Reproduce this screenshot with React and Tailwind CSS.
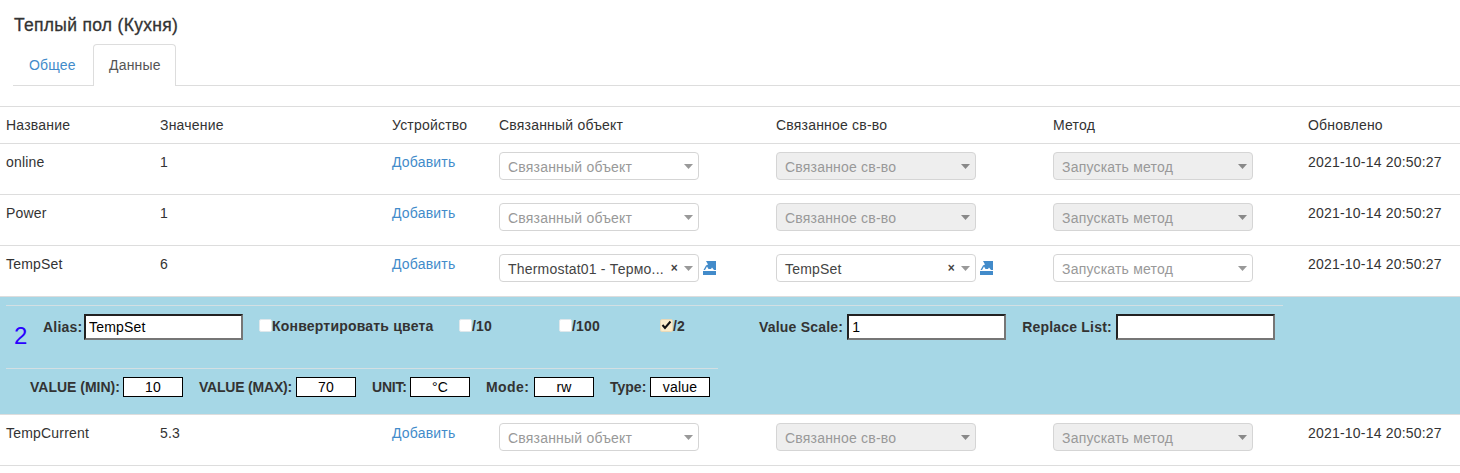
const rows1 = [
  { name: "online", value: "1" },
  { name: "Power", value: "1" },
];

function Arrow({ disabled }) {
  return (
    <svg width="9" height="5" viewBox="0 0 9 5" className="shrink-0">
      <path d="M0 0H9L4.5 5Z" fill={disabled ? "#888" : "#999"} />
    </svg>
  );
}

function LinkIcon() {
  return (
    <svg width="13" height="14" viewBox="0 0 13 14" className="ml-[4px] mt-[7px] shrink-0">
      <path
        d="M0 10H13V14H0ZM3 0H13V9H11L9 6.5 8 8H5.5L4 5.5 2 9H0.5L3 4.5 5 3.5Z"
        fill="#428bca"
      />
    </svg>
  );
}

function Select({ text, value, disabled, clear }) {
  return (
    <div className="flex items-start">
      <div
        className={
          "flex h-[28px] w-[200px] items-center rounded-[4px] border border-[#d5d5d5] pl-[8px] pr-[5px] " +
          (disabled ? "bg-[#eeeeee]" : "bg-white")
        }
      >
        <span className={"mt-[1px] min-w-0 flex-1 whitespace-nowrap " + (value ? "text-[#444444]" : "text-[#999999]")}>
          {value || text}
        </span>
        {clear && <span className="mr-[6px] text-[12px] font-bold leading-none text-[#444444]">×</span>}
        <Arrow disabled={disabled} />
      </div>
      {clear && <LinkIcon />}
    </div>
  );
}

function DataRow({ name, value, obj, prop }) {
  return (
    <tr className="border-b border-[#dddddd] align-top">
      <td className="h-[51px] pl-[6px] pt-[8px]">{name}</td>
      <td className="pl-[6px] pt-[8px]">{value}</td>
      <td className="pl-[6px] pt-[8px]">
        <a className="text-[#428bca]">Добавить</a>
      </td>
      <td className="pl-[6px] pt-[8px]">
        {obj ? <Select value={obj} clear /> : <Select text="Связанный объект" />}
      </td>
      <td className="pl-[6px] pt-[8px]">
        {prop ? <Select value={prop} clear /> : <Select text="Связанное св-во" disabled />}
      </td>
      <td className="pl-[6px] pt-[8px]">
        <Select text="Запускать метод" disabled={!prop} />
      </td>
      <td className="pl-[6px] pt-[8px] whitespace-nowrap">2021-10-14 20:50:27</td>
    </tr>
  );
}

function Check({ checked, label, width }) {
  return (
    <label className={"flex items-center " + width}>
      <span
        className={
          "mb-[2px] flex h-[13px] w-[13px] shrink-0 items-center justify-center rounded-[2px] border " +
          (checked ? "border-[#e9d9b8] bg-[#fbeccb]" : "border-[#dfe8ec] bg-white")
        }
      >
        {checked && (
          <svg width="11" height="10" viewBox="0 0 11 10">
            <path d="M1.5 5L4 8L9.5 1.5" fill="none" stroke="#111" strokeWidth="2" />
          </svg>
        )}
      </span>
      <b className="text-[#333333]">{label}</b>
    </label>
  );
}

function BigField({ label, value, className, labelWidth }) {
  return (
    <label className={"flex items-center gap-[4px] " + className}>
      <b className={"whitespace-nowrap text-[#333333] " + labelWidth}>{label}</b>
      <input
        readOnly
        value={value}
        className="h-[26px] w-[159px] border-2 border-t-[#222222] border-l-[#222222] border-r-[#767676] border-b-[#767676] bg-white pl-[3px] text-black outline-none"
      />
    </label>
  );
}

function SmallField({ label, value, labelClass }) {
  return (
    <label className="flex items-center gap-[4px]">
      <b className={"whitespace-nowrap text-[#333333] " + labelClass}>{label}</b>
      <input
        readOnly
        value={value}
        className="h-[20px] w-[60px] border border-black bg-white text-center text-black outline-none"
      />
    </label>
  );
}

export default function App() {
  return (
    <div className="h-[473px] w-[1460px] overflow-hidden bg-white font-['Liberation_Sans',Arial,sans-serif] text-[14px] leading-[20px] tracking-[0.2px] text-[#333333]">
      <h4 className="pl-[14px] pt-[16px] text-[17.5px] font-normal leading-[18px] tracking-[0.3px] [-webkit-text-stroke:0.3px_#333333]">
        Теплый пол (Кухня)
      </h4>
      <div className="ml-[13px] mt-[10px] flex h-[42px] border-b border-[#dddddd]">
        <a className="w-[80px] pl-[16px] pt-[11px] text-[#428bca]">Общее</a>
        <div className="-mb-px h-[42px] w-[83px] rounded-t-[4px] border border-b-0 border-[#dddddd] bg-white pl-[15px] pt-[10px] text-[#555555]">
          Данные
        </div>
      </div>

      <table className="mt-[20px] w-[1460px] table-fixed border-collapse border-t border-[#dddddd]">
        <colgroup>
          <col className="w-[154px]" />
          <col className="w-[232px]" />
          <col className="w-[107px]" />
          <col className="w-[277px]" />
          <col className="w-[277px]" />
          <col className="w-[255px]" />
          <col className="w-[158px]" />
        </colgroup>
        <thead>
          <tr className="border-b border-[#dddddd] text-left">
            <th className="h-[37px] pl-[6px] font-normal">Название</th>
            <th className="pl-[6px] font-normal">Значение</th>
            <th className="pl-[6px] font-normal whitespace-nowrap">Устройство</th>
            <th className="pl-[6px] font-normal">Связанный объект</th>
            <th className="pl-[6px] font-normal">Связанное св-во</th>
            <th className="pl-[6px] font-normal">Метод</th>
            <th className="pl-[6px] font-normal">Обновлено</th>
          </tr>
        </thead>
        <tbody>
          {rows1.map((r) => (
            <DataRow key={r.name} {...r} />
          ))}
          <DataRow name="TempSet" value="6" obj="Thermostat01 - Термо..." prop="TempSet" />
          <tr className="border-b border-[#dddddd]">
            <td colSpan={7} className="h-[118px] bg-[#a6d7e6] align-top">
              <div className="ml-[6px] mt-[8px] w-[1277px] border-t border-[#d3dfe3]" />
              <div className="flex h-[62px] items-start">
                <span className="ml-[14px] mt-[15px] w-[29px] text-[24px] leading-[30px] tracking-normal text-[#2a00ff]">2</span>
                <BigField label="Alias:" value="TempSet" labelWidth="w-[37px]" className="mt-[8px]" />
                <div className="ml-[16px] mt-[10px] flex">
                  <Check label="Конвертировать цвета" width="w-[200px]" />
                  <Check label="/10" width="w-[100px]" />
                  <Check label="/100" width="w-[101px]" />
                  <Check checked label="/2" width="w-[99px]" />
                </div>
                <BigField label="Value Scale:" value="1" className="mt-[8px]" />
                <BigField label="Replace List:" value="" className="ml-[16px] mt-[8px]" />
              </div>
              <div className="ml-[6px] w-[712px] border-t border-[#d3dfe3]" />
              <div className="ml-[30px] mt-[8px] flex gap-[16px]">
                <SmallField label="VALUE (MIN):" value="10" labelClass="w-[89px] tracking-normal" />
                <SmallField label="VALUE (MAX):" value="70" labelClass="w-[93px] tracking-[-0.2px]" />
                <SmallField label="UNIT:" value="°C" labelClass="w-[34px] tracking-[-0.2px]" />
                <SmallField label="Mode:" value="rw" labelClass="w-[44px] tracking-[0.4px]" />
                <SmallField label="Type:" value="value" labelClass="w-[36px] tracking-normal" />
              </div>
            </td>
          </tr>
          <DataRow name="TempCurrent" value="5.3" />
        </tbody>
      </table>
    </div>
  );
}
